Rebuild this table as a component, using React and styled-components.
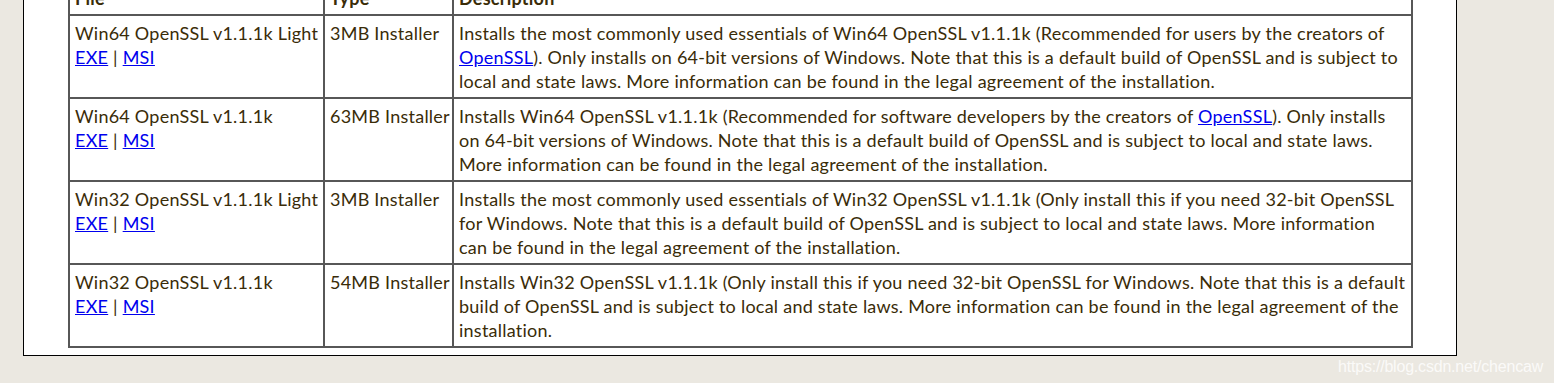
import styled, { createGlobalStyle } from "styled-components";

const GlobalStyle = createGlobalStyle`
  html, body {
    margin: 0;
    padding: 0;
    background: #ebe8e1;
    overflow: hidden;
  }
`;

const rows = [
  {
    name: "Win64 OpenSSL v1.1.1k Light",
    type: "3MB Installer",
    desc: [
      ["Installs the most commonly used essentials of Win64 OpenSSL v1.1.1k (Recommended for users by the creators of"],
      [{ link: "OpenSSL" }, "). Only installs on 64-bit versions of Windows. Note that this is a default build of OpenSSL and is subject to"],
      ["local and state laws. More information can be found in the legal agreement of the installation."],
    ],
  },
  {
    name: "Win64 OpenSSL v1.1.1k",
    type: "63MB Installer",
    desc: [
      ["Installs Win64 OpenSSL v1.1.1k (Recommended for software developers by the creators of ", { link: "OpenSSL" }, "). Only installs"],
      ["on 64-bit versions of Windows. Note that this is a default build of OpenSSL and is subject to local and state laws."],
      ["More information can be found in the legal agreement of the installation."],
    ],
  },
  {
    name: "Win32 OpenSSL v1.1.1k Light",
    type: "3MB Installer",
    desc: [
      ["Installs the most commonly used essentials of Win32 OpenSSL v1.1.1k (Only install this if you need 32-bit OpenSSL"],
      ["for Windows. Note that this is a default build of OpenSSL and is subject to local and state laws. More information"],
      ["can be found in the legal agreement of the installation."],
    ],
  },
  {
    name: "Win32 OpenSSL v1.1.1k",
    type: "54MB Installer",
    desc: [
      ["Installs Win32 OpenSSL v1.1.1k (Only install this if you need 32-bit OpenSSL for Windows. Note that this is a default"],
      ["build of OpenSSL and is subject to local and state laws. More information can be found in the legal agreement of the"],
      ["installation."],
    ],
  },
];

export default function App() {
  return (
    <Page>
      <GlobalStyle />
      <Sheet>
        <Table>
          <colgroup>
            <col style={{ width: 255 }} />
            <col style={{ width: 129 }} />
            <col />
          </colgroup>
          <thead>
            <tr>
              <Head>File</Head>
              <Head>Type</Head>
              <Head>Description</Head>
            </tr>
          </thead>
          <tbody>
            {rows.map((r) => (
              <tr key={r.name}>
                <Cell>
                  <Line>{r.name}</Line>
                  <Line>
                    <Link href="#">EXE</Link> | <Link href="#">MSI</Link>
                  </Line>
                </Cell>
                <Cell>{r.type}</Cell>
                <Cell>
                  {r.desc.map((parts, i) => (
                    <Line key={i}>
                      {parts.map((p, j) =>
                        typeof p === "string" ? p : <Link key={j} href="#">{p.link}</Link>
                      )}
                    </Line>
                  ))}
                </Cell>
              </tr>
            ))}
          </tbody>
        </Table>
      </Sheet>
      <Watermark>https://blog.csdn.net/chencaw</Watermark>
    </Page>
  );
}

const Page = styled.div`
  position: relative;
  width: 1554px;
  height: 383px;
  padding-left: 23px;
  box-sizing: border-box;
  overflow: hidden;
`;

const Sheet = styled.div`
  width: 1434px;
  box-sizing: border-box;
  background: #fff;
  border: 1px solid #000;
  border-top: none;
  padding: 0 43px 7px 44px;
`;

const Table = styled.table`
  margin-top: -21px;
  width: 1345px;
  table-layout: fixed;
  border-collapse: collapse;
  border: 2px solid #575757;
  font-family: Lato, "Open Sans", sans-serif;
  font-size: 18px;
  letter-spacing: 0.24px;
  line-height: 24px;
  color: #3a2c08;
`;

const Head = styled.th`
  text-align: left;
  font-weight: bold;
  border: 2px solid #575757;
  padding: 5px 5px 4px 5px;
`;

const Cell = styled.td`
  vertical-align: top;
  border: 2px solid #575757;
  padding: 5px 4px 4px 5px;
  white-space: nowrap;
  overflow: hidden;
`;

const Line = styled.div`
  white-space: nowrap;
`;

const Link = styled.a`
  color: #0000ee;
  text-decoration: underline;
`;

const Watermark = styled.div`
  position: absolute;
  right: 11px;
  bottom: 7px;
  font-family: "Liberation Sans", Arial, sans-serif;
  font-size: 16px;
  color: rgba(255, 255, 255, 0.8);
  letter-spacing: -0.2px;
`;
